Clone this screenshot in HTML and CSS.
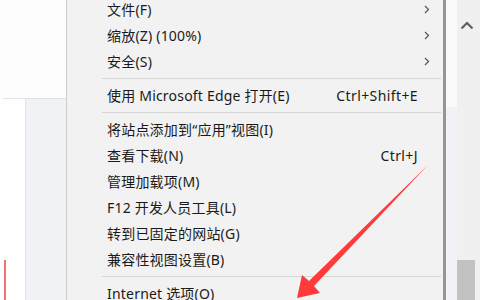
FILE: index.html
```html
<!DOCTYPE html>
<html lang="zh-CN">
<head>
<meta charset="utf-8">
<title>IE 工具菜单</title>
<link rel="stylesheet" href="styles.css">
</head>
<body>
<div class="screen">
  <div class="left">
    <div class="left-top"></div>
    <div class="hline"></div>
    <div class="left-bottom">
      <div class="gutter"><div class="red-mark"></div></div>
      <div class="panel"></div>
    </div>
  </div>

  <div class="menu">
    <div class="item"><span class="label">文件(F)</span><span class="sub"><svg width="6" height="9" viewBox="0 0 6 9"><path d="M1 1 L4.5 4.5 L1 8" fill="none" stroke="#555" stroke-width="1.2"/></svg></span></div>
    <div class="item"><span class="label">缩放(Z) (100%)</span><span class="sub"><svg width="6" height="9" viewBox="0 0 6 9"><path d="M1 1 L4.5 4.5 L1 8" fill="none" stroke="#555" stroke-width="1.2"/></svg></span></div>
    <div class="item"><span class="label">安全(S)</span><span class="sub"><svg width="6" height="9" viewBox="0 0 6 9"><path d="M1 1 L4.5 4.5 L1 8" fill="none" stroke="#555" stroke-width="1.2"/></svg></span></div>
    <div class="sep"></div>
    <div class="item"><span class="label">使用 Microsoft Edge 打开(E)</span><span class="key">Ctrl+Shift+E</span></div>
    <div class="sep"></div>
    <div class="item"><span class="label">将站点添加到“应用”视图(I)</span></div>
    <div class="item"><span class="label">查看下载(N)</span><span class="key">Ctrl+J</span></div>
    <div class="item"><span class="label">管理加载项(M)</span></div>
    <div class="item"><span class="label">F12 开发人员工具(L)</span></div>
    <div class="item"><span class="label">转到已固定的网站(G)</span></div>
    <div class="item"><span class="label">兼容性视图设置(B)</span></div>
    <div class="sep"></div>
    <div class="item"><span class="label">Internet 选项(O)</span></div>
  </div>

  <div class="right">
    <div class="strip">
      <div class="strip-top"></div>
      <div class="strip-bottom"></div>
    </div>
    <div class="scrollbar">
      <svg class="up" width="14" height="10" viewBox="0 0 14 10"><path d="M1.5 8.5 L7 3 L12.5 8.5" fill="none" stroke="#5f5f5f" stroke-width="2.2"/></svg>
      <div class="thumb"></div>
    </div>
  </div>

  <svg class="annotation" width="480" height="300" viewBox="0 0 480 300">
    <polygon points="428,165 314,286 320,293 297,298 302,275 309,281" fill="#ff3a3a"/>
  </svg>
</div>
</body>
</html>
```

FILE: styles.css
```css
html, body {
  margin: 0;
  padding: 0;
  width: 480px;
  height: 300px;
  overflow: hidden;
  background: #fdfdfd;
}

.screen {
  position: relative;
  display: flex;
  width: 480px;
  height: 300px;
  overflow: hidden;
  font-family: "Noto Sans", "Noto Sans CJK SC", sans-serif;
}

.left {
  width: 66px;
  display: flex;
  flex-direction: column;
  flex: none;
}

.left-top {
  height: 108px;
  background: #fdfdfd;
}

.hline {
  height: 1px;
  margin-left: 3px;
  background: #e2e2e4;
}

.left-bottom {
  flex: 1;
  display: flex;
}

.gutter {
  width: 25px;
  background: #fefefe;
}

.red-mark {
  width: 2px;
  height: 40px;
  margin-top: 161px;
  margin-left: 4px;
  background: #f27272;
}

.panel {
  flex: 1;
  background: #f1f2f6;
  border-left: 1px solid #e3e3ea;
}

.menu {
  width: 376px;
  flex: none;
  background: #f2f2f2;
  border-left: 1px solid #cdcdcd;
  border-right: 3px solid #959595;
  margin-top: -4px;
  color: #1a1a1a;
  font-size: 14px;
}

.item {
  height: 26px;
  display: flex;
  align-items: center;
  padding-left: 40px;
  padding-right: 13px;
  white-space: nowrap;
}

.label {
  flex: 1;
  letter-spacing: 0.2px;
}

.key {
  margin-right: 12px;
  letter-spacing: 0.4px;
}

.sub {
  display: flex;
  align-items: center;
}

.sep {
  height: 8px;
  display: flex;
  align-items: center;
  margin-left: 35px;
  margin-right: 2px;
}

.sep::before {
  content: "";
  flex: 1;
  height: 1px;
  background: #d6d6d6;
}

.right {
  flex: 1;
  display: flex;
}

.strip {
  width: 11px;
  display: flex;
  flex-direction: column;
}

.strip-top {
  height: 107px;
  background: #fafafa;
}

.strip-bottom {
  flex: 1;
  background: #f0f2f7;
}

.scrollbar {
  flex: 1;
  background: #f0f0f0;
  display: flex;
  flex-direction: column;
  align-items: flex-start;
}

.up {
  margin-top: 20px;
  margin-left: 3px;
}

.thumb {
  margin-top: auto;
  width: 18px;
  height: 40px;
  background: #c2c2c2;
}

.annotation {
  position: absolute;
  left: 0;
  top: 0;
  pointer-events: none;
}
```
